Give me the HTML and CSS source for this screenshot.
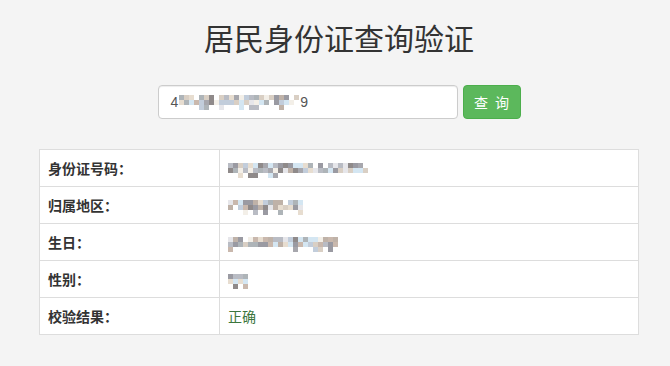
FILE: index.html
```html
<!DOCTYPE html>
<html lang="zh-CN">

<head>
    <meta charset="UTF-8">
    <title>居民身份证查询验证</title>
    <link rel="stylesheet" href="styles.css">
</head>

<body>
    <div class="page">
        <h1 class="title">居民身份证查询验证</h1>

        <form class="search">
            <div class="search-input">
                <span>4</span><span class="mosaic" data-cols="24" data-rows="3" data-seed="7"></span><span>9</span>
            </div>
            <button type="button" class="btn-query">查 询</button>
        </form>

        <table class="result">
            <tr>
                <th>身份证号码：</th>
                <td><span class="mosaic" data-cols="28" data-rows="3" data-seed="3"></span></td>
            </tr>
            <tr>
                <th>归属地区：</th>
                <td><span class="mosaic" data-cols="15" data-rows="3" data-seed="11"></span></td>
            </tr>
            <tr>
                <th>生日：</th>
                <td><span class="mosaic" data-cols="22" data-rows="3" data-seed="5"></span></td>
            </tr>
            <tr>
                <th>性别：</th>
                <td><span class="mosaic" data-cols="4" data-rows="3" data-seed="2"></span></td>
            </tr>
            <tr>
                <th>校验结果：</th>
                <td class="ok">正确</td>
            </tr>
        </table>
    </div>

    <script>
        // pixelated placeholder for the hidden values
        const palette = ['#a7a7ad', '#c9b8ad', '#b9bcc4', '#d9cfc4', '#9a9aa2', '#c2cddb',
            '#e7ddd0', '#aeb4b8', '#8f8a8a', '#d4e6f2', '#bfb2a8', '#e6e6ea', '#f3efe8'];

        document.querySelectorAll('.mosaic').forEach(el => {
            const cols = +el.dataset.cols;
            const rows = +el.dataset.rows;
            let seed = +el.dataset.seed;
            const rand = () => {
                seed = (seed * 9301 + 49297) % 233280;
                return seed / 233280;
            };
            el.style.width = cols * 5 + 'px';
            for (let r = 0; r < rows; r++) {
                for (let c = 0; c < cols; c++) {
                    const cell = document.createElement('i');
                    let blank = r === 0 ? rand() < 0.1 : r === 1 ? rand() < 0.05 : rand() < 0.7;
                    if (!blank) cell.style.background = palette[Math.floor(rand() * palette.length)];
                    el.appendChild(cell);
                }
            }
        });
    </script>
</body>

</html>
```

FILE: styles.css
```css
body {
    background: #f4f4f4;
    color: #333;
    font-family: "Liberation Sans", "Noto Sans CJK SC", sans-serif;
    font-size: 14px;
    margin: 0 0 0 8px;
}

.page {
    width: 600px;
    margin: 0 auto;
}

.title {
    margin: 20px 0 25px;
    font-size: 30px;
    font-weight: normal;
    line-height: 40px;
    text-align: center;
    color: #333;
}

.search {
    display: flex;
    justify-content: center;
    gap: 5px;
    margin-bottom: 30px;
}

.search-input {
    box-sizing: border-box;
    width: 300px;
    height: 34px;
    display: flex;
    align-items: center;
    padding: 0 12px;
    background: #fff;
    border: 1px solid #ccc;
    border-radius: 4px;
    box-shadow: inset 0 1px 1px rgba(0, 0, 0, 0.075);
    color: #555;
    font-size: 14px;
}

.search-input .mosaic {
    margin: 0 1px;
}

.btn-query {
    width: 58px;
    height: 34px;
    background: #5cb85c;
    border: 1px solid #4cae4c;
    border-radius: 4px;
    color: #fff;
    font-family: "Noto Sans CJK SC", sans-serif;
    font-size: 14px;
    letter-spacing: 2px;
    padding: 0 0 0 2px;
}

.result {
    width: 600px;
    border-collapse: collapse;
    background: #fff;
    border: 1px solid #ddd;
}

.result th,
.result td {
    height: 20px;
    padding: 8px;
    border: 1px solid #ddd;
    line-height: 20px;
    text-align: left;
    vertical-align: middle;
}

.result th {
    width: 163px;
    font-family: "Noto Sans CJK SC", sans-serif;
    font-weight: bold;
    font-size: 14px;
    color: #333;
}

.result td {
    font-family: "Noto Sans CJK SC", sans-serif;
    font-size: 14px;
}

.result .ok {
    color: #3c763d;
}

.mosaic {
    display: inline-flex;
    flex-wrap: wrap;
    vertical-align: middle;
}

.mosaic i {
    width: 5px;
    height: 5px;
}
```
